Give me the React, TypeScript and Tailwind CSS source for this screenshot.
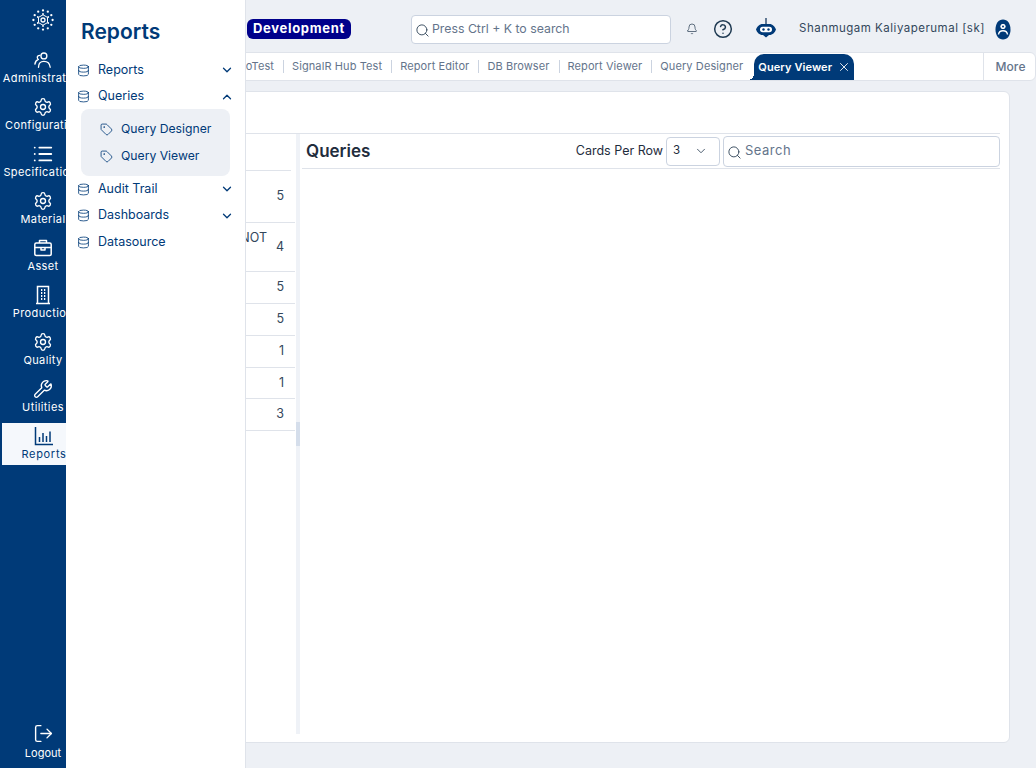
import React from "react";
import { ChevronDown, ChevronUp, CircleHelp, Bell, Database, List, LogOut, Search, Settings, Tag, Wrench, X } from "lucide-react";

const ring = (r: number, n: number, start = 0) =>
	Array.from({ length: n }, (_, i) => {
		const a = start + (i * Math.PI * 2) / n;
		return [11 + r * Math.cos(a), 11 + r * Math.sin(a)];
	});

const Logo = () => (
	<svg width="22" height="22" viewBox="0 0 22 22" fill="white">
		{ring(9.6, 12, Math.PI / 6).map(([x, y], i) => (
			<circle key={i} cx={x} cy={y} r={1.15} />
		))}
		{ring(6, 6, Math.PI / 2).map(([x, y], i) => (
			<circle key={i} cx={x} cy={y} r={0.9} />
		))}
		<path d="M11 5.8 15.5 8.4v5.2L11 16.2 6.5 13.6V8.4z" fill="none" stroke="white" strokeWidth="1" />
		<circle cx="11" cy="11" r="2" fill="none" stroke="white" strokeWidth="1.3" />
	</svg>
);

const People = () => (
	<svg width="18" height="18" viewBox="0 0 20 20" fill="none" stroke="white" strokeWidth="1.5" strokeLinecap="round" strokeLinejoin="round">
		<circle cx="11" cy="5.5" r="3.3" />
		<path d="M5 18c0-4.5 2.5-6.5 6-6.5s6.5 2 7 6.5" />
		<path d="M6.5 4.8C4.5 4.8 3.5 6 3.7 7.5c.1.9.6 1.5 1.2 1.9C3 10 1.5 11.5 1 14.5" />
	</svg>
);

const Briefcase = () => (
	<svg width="20" height="20" viewBox="0 0 20 20" fill="none" stroke="white" strokeWidth="1.5" strokeLinejoin="round">
		<rect x="1.8" y="5" width="16.4" height="12.5" rx="1.5" />
		<path d="M6.5 5V2.5h7V5M1.8 9.5h16.4M8 9.5v2.5h4V9.5" />
	</svg>
);

const Building = () => (
	<svg width="20" height="20" viewBox="0 0 20 20" fill="none" stroke="white" strokeWidth="1.5">
		<path d="M4.5 1.5h11v17h-11zM3 18.5h14" />
		<path d="M8 5h1.3M11 5h1.3M8 8h1.3M11 8h1.3M8 11h1.3M11 11h1.3M8 14h1.3M11 14h1.3" strokeWidth="1.8" />
	</svg>
);

const Chart = () => (
	<svg width="20" height="20" viewBox="0 0 20 20" fill="none" stroke="#003a78" strokeWidth="1.5">
		<path d="M1.5 1v17.5H19" />
		<path d="M5.5 11v5M9 7v9M12.500 10v6M16 5.500V16" />
	</svg>
);

const Bot = () => (
	<svg width="22" height="22" viewBox="0 0 22 22">
		<path d="M11 0v7" stroke="#16395f" strokeWidth="1.3" />
		<path d="M7.5 6h7c3 0 5.5 2.5 6.5 5.5-1 3-3.5 5.5-6.5 5.5H14l-3 2.500L8 17h-.5C4.500 17 2 14.500 1 11.500 2 8.500 4.500 6 7.500 6z" fill="#003a78" />
		<rect x="5" y="8.8" width="12" height="5.4" rx="2.7" fill="white" />
		<circle cx="8.5" cy="11.5" r="1.2" fill="#003a78" />
		<circle cx="13.5" cy="11.5" r="1.2" fill="#003a78" />
	</svg>
);

const Avatar = () => (
	<svg width="16" height="21" viewBox="0 0 16 21">
		<path d="M8 .5c4.500 0 7.500 4 7.500 10s-3 10-7.500 10S.5 16.500.5 10.500 3.500.5 8 .5z" fill="#003a78" />
		<circle cx="8" cy="7.5" r="2.2" fill="white" stroke="white" strokeWidth="1" />
		<circle cx="8" cy="7.5" r="1" fill="#003a78" />
		<path d="M3.5 15.500c.4-2.800 2.200-3.800 4.500-3.800s4.100 1 4.500 3.800" fill="none" stroke="white" strokeWidth="1.4" />
	</svg>
);

const railItems = [
	{ label: "Administration", icon: <People /> },
	{ label: "Configuration", icon: <Settings className="h-5 w-5" strokeWidth={1.6} /> },
	{ label: "Specifications", icon: <List className="h-[22px] w-[22px]" strokeWidth={2} /> },
	{ label: "Material", icon: <Settings className="h-5 w-5" strokeWidth={1.6} /> },
	{ label: "Asset", icon: <Briefcase /> },
	{ label: "Production", icon: <Building /> },
	{ label: "Quality", icon: <Settings className="h-5 w-5" strokeWidth={1.6} /> },
	{ label: "Utilities", icon: <Wrench className="h-5 w-5" strokeWidth={1.6} /> },
];

const tabs = ["SignalR Hub Test", "Report Editor", "DB Browser", "Report Viewer", "Query Designer"];

const rows = [
	{ h: "h-[52px]", v: "5" },
	{ h: "h-[49px]", v: "4", note: "NOT" },
	{ h: "h-8", v: "5" },
	{ h: "h-8", v: "5" },
	{ h: "h-8", v: "1" },
	{ h: "h-[31px]", v: "1" },
	{ h: "h-8", v: "3" },
];

const MenuRow = ({ label, open }: { label: string; open?: boolean }) => (
	<div className="flex h-[26.5px] items-center pl-[11px] pr-[11px] text-[#003a78]">
		<Database className="h-[13px] w-[13px]" strokeWidth={1.5} />
		<span className="ml-[8px] flex-1 text-[12.5px]">{label}</span>
		{open ? <ChevronUp className="h-[14px] w-[14px]" strokeWidth={2.2} /> : <ChevronDown className="h-[14px] w-[14px]" strokeWidth={2.2} />}
	</div>
);

const SubRow = ({ label }: { label: string }) => (
	<div className="flex h-[27px] items-center pl-[19px] text-[#003a78]">
		<Tag className="h-[13px] w-[13px]" strokeWidth={1.5} />
		<span className="ml-[8px] text-[12.2px]">{label}</span>
	</div>
);

export default function App() {
	return (
		<div className="relative flex h-[768px] w-[1036px] overflow-hidden bg-[#edf0f5] font-['Inter',sans-serif] text-[#1f2d3d]">
			{/* rail runs under the flyout */}
			<aside className="flex w-[86px] shrink-0 flex-col bg-[#003a78] pl-[2px] text-white">
				<div className="flex h-[47px] w-[82px] items-start justify-center pt-[9px]">
					<Logo />
				</div>
				{railItems.map((item) => (
					<div key={item.label} className="flex h-[47px] w-[82px] flex-col items-center overflow-hidden pt-[3px]">
						<div className="flex h-[20px] items-center">{item.icon}</div>
						<span className="whitespace-nowrap text-[11px] leading-[16px] tracking-[0.4px]">{item.label}</span>
					</div>
				))}
				<div className="flex h-[42px] w-[84px] flex-col items-center bg-[#f5f8fc] pt-[3px] text-[#003a78]">
					<Chart />
					<span className="text-[11px] leading-[16px] tracking-[0.7px]">Reports</span>
				</div>
				<div className="mt-auto flex h-[45px] w-[82px] flex-col items-center">
					<LogOut className="h-[21px] w-[21px]" strokeWidth={1.6} />
					<span className="mt-[1px] text-[11px] leading-[16px]">Logout</span>
				</div>
			</aside>

			<main className="flex min-w-0 flex-1 flex-col">
				<header className="flex h-[52px] shrink-0 items-center pl-[161px] pt-[6px]">
					<span className="flex h-[20px] w-[104px] items-center justify-center rounded-[6px] bg-[#00008b] text-[13px] font-bold tracking-[0.7px] text-white">Development</span>
					<div className="ml-[60px] flex h-[29px] w-[260px] items-center rounded-[4px] border border-[#cbd3e0] bg-white pl-[3px] text-[12.3px] text-[#64748b]">
						<Search className="mt-[3px] h-[15px] w-[15px] text-[#33475b]" strokeWidth={1.5} />
						<span className="ml-[2px]">Press Ctrl + K to search</span>
					</div>
					<Bell className="ml-[15px] h-[12px] w-[12px] text-[#33475b]" strokeWidth={1.5} />
					<CircleHelp className="ml-[15px] h-[20px] w-[20px] text-[#1f3a52]" strokeWidth={1.8} />
					<div className="ml-[22px]"><Bot /></div>
					<span className="ml-[22px] w-[185px] whitespace-nowrap text-[11.5px] tracking-[0.5px] text-[#33475b]">Shanmugam Kaliyaperumal [sk]</span>
					<div className="ml-[11px]"><Avatar /></div>
				</header>

				<nav className="flex h-[29px] shrink-0 items-center rounded-[6px] border border-[#dfe3ea] bg-white text-[11px] tracking-[0.1px] text-[#64748b]">
					<div className="ml-[155px] w-[32px] text-right">oTest</div>
					{tabs.map((tab) => (
						<React.Fragment key={tab}>
							<span className="ml-[9px] mr-[8px] h-[13px] w-px bg-[#cbd3e0]" />
							<span className="whitespace-nowrap">{tab}</span>
						</React.Fragment>
					))}
					<div className="relative ml-[11px] flex h-[26px] w-[100px] items-center self-end rounded-t-[10px] bg-[#003a78] pl-[4px] font-semibold text-white">
						<span className="absolute -left-[6px] bottom-0 h-[6px] w-[6px] bg-[radial-gradient(circle_at_0_0,transparent_6px,#003a78_6px)]" />
						Query Viewer
						<X className="ml-[5px] h-[14px] w-[14px]" strokeWidth={1.5} />
					</div>
					<div className="ml-auto flex h-full w-[52px] items-center justify-center border-l border-[#dfe3ea] pl-[2px] text-[12px] font-medium">More</div>
				</nav>

				<section className="mb-[25px] mr-[26px] mt-[10px] flex min-h-0 flex-1 flex-col rounded-[6px] border border-[#dfe3ea] bg-white pl-[16px] pr-[9px] pt-[41px]">
					<div className="flex h-[601px] border-t border-[#dfe3ea]">
						<div className="flex w-[192px] flex-col">
							<div className="h-[37px] w-[188px] border-b border-[#dfe3ea]" />
							{rows.map((row, i) => (
								<div key={i} className={`${row.h} relative flex items-center justify-end border-b border-[#dfe3ea] pr-[11px] text-[12.5px] text-[#33475b]`}>
									{row.note && <span className="absolute right-[28px] top-[6px]">{row.note}</span>}
									{row.v}
								</div>
							))}
						</div>
						<div className="relative ml-px w-[4px] bg-[#eff2f7]">
							<div className="absolute left-0 top-[288px] h-[24px] w-[4px] bg-[#d5deeb]" />
						</div>
						<div className="ml-[2px] flex-1">
							<div className="flex h-[35px] items-center border-b border-[#dfe3ea] pl-[4px]">
								<span className="mt-[1px] flex-1 text-[17px] font-semibold text-[#1f2d3d]">Queries</span>
								<span className="mr-[3px] text-[12.5px]">Cards Per Row</span>
								<div className="flex h-[29px] w-[54px] items-center justify-between rounded-[4px] border border-[#cbd3e0] px-[6px] text-[11.5px]">
									3
									<ChevronDown className="mr-[5px] h-[14px] w-[14px] text-[#33475b]" strokeWidth={1.5} />
								</div>
								<div className="ml-[3px] flex h-[31px] w-[277px] items-center rounded-[4px] border border-[#cbd3e0] pl-[3px] text-[13px] tracking-[0.5px] text-[#64748b]">
									<Search className="mt-[3px] h-[15px] w-[15px] text-[#33475b]" strokeWidth={1.5} />
									<span className="ml-[3px]">Search</span>
								</div>
							</div>
						</div>
					</div>
				</section>
			</main>

			{/* flyout over rail and content */}
			<div className="absolute bottom-0 left-[66px] top-0 w-[180px] border-r border-[#dfe3ea] bg-white">
				<h1 className="ml-[15px] mt-[18px] text-[21px] font-semibold leading-[27px] text-[#003a78]">Reports</h1>
				<div className="mt-[12px]">
					<MenuRow label="Reports" />
					<MenuRow label="Queries" open />
					<div className="-mt-px mx-[15px] h-[67px] rounded-[8px] bg-[#edf0f5] pb-[5px] pt-[7px]">
						<SubRow label="Query Designer" />
						<SubRow label="Query Viewer" />
					</div>
					<MenuRow label="Audit Trail" />
					<MenuRow label="Dashboards" />
					<div className="flex h-[26.5px] items-center pl-[11px] text-[#003a78]">
						<Database className="h-[13px] w-[13px]" strokeWidth={1.5} />
						<span className="ml-[8px] text-[12.5px]">Datasource</span>
					</div>
				</div>
			</div>
		</div>
	);
}
